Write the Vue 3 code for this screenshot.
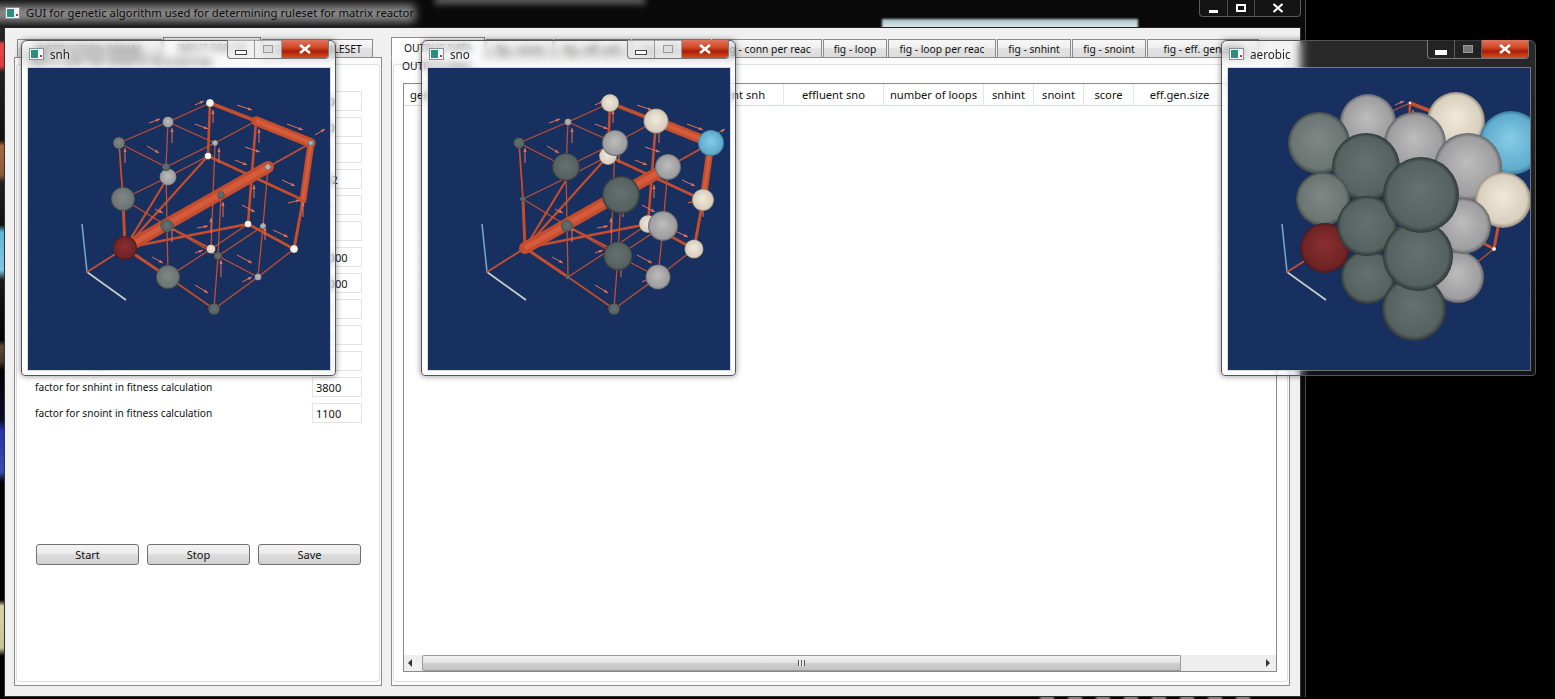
<script setup>
const leftTabs = [
  { t: 'INSTRUCTION PARAM.', w: 145 },
  { t: 'INPUT FOR GA', w: 98, on: true },
  { t: 'DEFAULT RULESET', w: 111 }
]
const rightTabs = [
  { t: 'OUTPUT DATA', w: 94, on: true },
  { t: 'fig - score', w: 67 },
  { t: 'fig - eff. snh', w: 77 },
  { t: 'fig - eff. sno', w: 79 },
  { t: 'fig - conn per reac', w: 110 },
  { t: 'fig - loop', w: 64 },
  { t: 'fig - loop per reac', w: 108 },
  { t: 'fig - snhint', w: 74 },
  { t: 'fig - snoint', w: 74 },
  { t: 'fig - eff. gen.size', w: 112 }
]
const rows = [
  ['population size', '100'], ['number of generations', '500'], ['mutation rate', '0.1'],
  ['crossover rate', '0.82'], ['influent snh', '30'], ['influent sno', '5'],
  ['reactor volume', '15000'], ['aeration volume', '12000'], ['factor for effluent snh', '30'],
  ['factor for effluent sno', '10'], ['factor for loops', '20'],
  ['factor for snhint in fitness calculation', '3800'],
  ['factor for snoint in fitness calculation', '1100']
]
const cols = [
  ['generation', 70], ['connectivity', 105], ['conn per reac', 105], ['effluent snh', 100],
  ['effluent sno', 100], ['number of loops', 100], ['snhint', 50], ['snoint', 50], ['score', 50],
  ['eff.gen.size', 92]
]

const P = {
  A: [182, 35], X: [228, 53], D: [283, 75], B: [140, 54], C: [91, 75], E: [187, 75], F: [180, 88],
  H: [138, 99], G: [240, 99], J: [193, 127], W: [275, 132], K: [95, 131], I: [140, 109], M: [139, 158],
  N: [220, 156], O: [235, 158], R: [266, 181], P: [183, 181], Q: [190, 188], S: [97, 180],
  T: [140, 209], U: [230, 209], V: [186, 241]
}
const edges = [
  ['C','B',1.3],['B','A',1.3],['C','H',1.3],['H','E',1.3],['B','E',1.3],['E','X',1.3],['K','I',1.3],['I','F',1.3],
  ['K','M',1.3],['M','Q',1.3],['Q','U',1.3],['P','N',1.3],['Q','O',1.3],
  ['T','P',1.3],['U','R',1.3],['V','U',1.3],['T','V',1.6],
  ['B','H',1.3],['H','M',1.3],['M','T',1.3],['E','P',1.3],['J','Q',1.3],['Q','V',1.3],['G','O',1.3],['O','U',1.3],
  ['M','P',2],['N','R',2.6],['C','K',1.8],['K','S',3],['S','T',3],['D','G',2],['F','W',2.8],
  ['A','F',2.6],['X','N',2.6],['W','R',3],['S','F',2.2],['S','I',2.2],['S','N',2.8],['A','X',3.5],['X','D',9.5],['D','W',7],['S','G',12],
  ['S','AX',2]
]
const arrows = [
  [119,78,131,85],[209,37,224,42],[259,56,275,62],[287,67,297,61],[167,37,176,33],[121,55,132,51],
  [167,56,180,61],[217,79,232,84],[207,92,219,97],[254,112,267,118],[214,137,227,144],[245,162,260,169],
  [209,187,224,195],[167,217,180,225],[124,189,135,195],[169,160,180,158],[167,185,175,182],[127,141,135,145],
  [214,214,224,209],[260,135,272,132],
  [97,95,97,80],[144,75,144,60],[185,55,185,42],[231,75,231,61],[191,95,191,80],[195,149,195,134],
  [144,174,144,159],[226,130,226,117],[237,172,237,159],[193,209,193,192],[275,149,275,134],[183,165,183,150]
]

const shades = {
  dark: ['#64716f', '#55625f', '#2f3838'],
  mid: ['#808886', '#6b7572', '#414a48'],
  light: ['#bdbdbd', '#9e9ea0', '#646467'],
  cream: ['#f1e9da', '#d8cfbf', '#93897a'],
  white: ['#ffffff', '#efe8da', '#8b8678'],
  blue: ['#86cde9', '#60accd', '#38789a'],
  red: ['#8a3030', '#702324', '#431a24']
}
const n = (k, r, c) => ({ k, r, c })
const windows = [
  {
    id: 'snh', title: 'snh', x: 21, dark: false,
    nodes: [
      n('A',4,'white'),n('B',5.5,'light'),n('C',6,'mid'),n('D',2.5,'blue'),n('E',3,'light'),n('F',3.5,'white'),
      n('G',3,'light'),n('I',8.5,'light'),n('H',4,'dark'),n('J',3.5,'dark'),n('K',12,'mid'),n('M',6.5,'dark'),
      n('N',3.5,'white'),n('O',3,'light'),n('P',4.5,'cream'),n('Q',4,'dark'),n('R',4,'white'),n('S',12,'red'),
      n('T',12,'mid'),n('U',3.5,'light'),n('V',6,'dark')
    ]
  },
  {
    id: 'sno', title: 'sno', x: 421, dark: false,
    nodes: [
      n('B',3.5,'light'),n('C',5.5,'dark'),n('K',3,'dark'),n('T',2.5,'dark'),n('F',9,'cream'),n('A',9,'cream'),n('X',12.5,'cream'),
      n('E',13,'light'),n('D',13,'blue'),n('H',14,'dark'),n('G',13,'light'),n('W',11,'cream'),n('M',6,'dark'),
      n('N',9,'cream'),n('O',15,'light'),n('R',9.5,'cream'),n('U',12.5,'light'),n('Q',14.5,'dark'),n('J',19,'dark'),n('V',6,'dark')
    ]
  },
  {
    id: 'aerobic', title: 'aerobic', x: 1221, dark: true,
    nodes: [
      n('A',1.5,'white'),n('B',28,'light'),n('X',29,'cream'),n('D',32,'blue'),n('C',31,'mid'),n('E',31,'light'),
      n('H',34,'dark'),n('G',34,'light'),n('W',28,'cream'),n('R',2,'white'),n('K',27,'mid'),n('U',26,'light'),n('O',28,'light'),
      n('S',25,'red'),n('T',27,'dark'),n('M',30,'dark'),n('V',32,'dark'),
      n('Q',35,'dark'),n('J',38,'dark')
    ]
  }
]
const edgeLines = edges.map(([a, b, w]) => {
  const p = P[a]
  const q = b === 'AX' ? [59, 204] : P[b]
  return { x1: p[0], y1: p[1], x2: q[0], y2: q[1], w }
})
const tubes = edgeLines.filter((e) => e.w >= 6)
const arrowLines = arrows.map(([x1, y1, x2, y2]) => {
  const len = Math.hypot(x2 - x1, y2 - y1)
  const ux = (x2 - x1) / len
  const uy = (y2 - y1) / len
  const bx = x2 - ux * 4
  const by = y2 - uy * 4
  const head = `${x2},${y2} ${bx - uy * 1.6},${by + ux * 1.6} ${bx + uy * 1.6},${by - ux * 1.6}`
  return { x1, y1, x2, y2, head }
})
const nodesOf = (w) => w.nodes.map((d) => ({
  ...d, x: P[d.k][0], y: P[d.k][1], fill: `url(#${w.id}-${d.c})`
}))
const shadeList = Object.entries(shades)
</script>

<template>
  <div class="desktop">
    <div class="behind-bottom"></div>

    <section class="main-window">
      <header class="main-title">
        <i class="glow glow-title"></i>
        <i class="glow glow-top"></i>
        <i class="glow glow-patch"></i>
        <svg class="app-icon" viewBox="0 0 15 12" width="15" height="12" aria-hidden="true">
          <rect x="0.5" y="0.5" width="14" height="11" fill="#f4f4f4" stroke="#8a8f94" />
          <rect x="2" y="2" width="7" height="8" fill="#2f8b80" />
          <rect x="11" y="7" width="2" height="2" fill="#c03a2b" />
        </svg>
        <span class="main-title-text">GUI for genetic algorithm used for determining ruleset for matrix reactor</span>
        <div class="main-caption">
          <span class="cap-btn cap-min"><i></i></span>
          <span class="cap-btn cap-max"><i></i></span>
          <span class="cap-btn cap-close">
            <svg viewBox="0 0 12 10" width="12" height="10" aria-hidden="true">
              <path d="M1.5 1 L10.5 9 M10.5 1 L1.5 9" stroke="#fff" stroke-width="2.2" fill="none" />
            </svg>
          </span>
        </div>
      </header>

      <div class="client">
        <div class="tab-widget tab-left">
          <nav class="tabs">
            <span
              v-for="tab in leftTabs"
              :key="tab.t"
              class="tab"
              :class="{ on: tab.on }"
              :style="{ width: tab.w + 'px' }"
            >{{ tab.t }}</span>
          </nav>
          <div class="pane">
            <div class="group form-group">
              <div class="group-title left-title">INPUT FOR THE GENETIC ALGORITHM</div>
              <div v-for="r in rows" :key="r[0]" class="form-row">
                <span class="form-label">{{ r[0] }}</span>
                <span class="input">{{ r[1] }}</span>
              </div>
              <div class="buttons">
                <button class="btn">Start</button>
                <button class="btn">Stop</button>
                <button class="btn">Save</button>
              </div>
            </div>
          </div>
        </div>

        <div class="tab-widget">
          <nav class="tabs">
            <span
              v-for="tab in rightTabs"
              :key="tab.t"
              class="tab"
              :class="{ on: tab.on }"
              :style="{ width: tab.w + 'px' }"
            >{{ tab.t }}</span>
          </nav>
          <div class="pane">
            <div class="group table-group">
              <div class="group-title out-title">OUTPUT DATA</div>
              <div class="table">
                <div class="thead">
                  <span v-for="c in cols" :key="c[0]" class="th" :style="{ width: c[1] + 'px' }">{{ c[0] }}</span>
                </div>
                <div class="tbody"></div>
                <div class="scrollbar">
                  <span class="arrow arrow-left"></span>
                  <span class="thumb"><i></i></span>
                  <span class="arrow arrow-right"></span>
                </div>
              </div>
            </div>
          </div>
        </div>
      </div>
    </section>

    <article
      v-for="w in windows"
      :key="w.id"
      class="gl-window"
      :class="{ dark: w.dark }"
      :style="{ left: w.x + 'px' }"
    >
      <header class="gl-title">
        <svg class="gl-icon" viewBox="0 0 15 12" width="15" height="12" aria-hidden="true">
          <rect x="0.5" y="0.5" width="14" height="11" fill="#f6f6f6" stroke="#8a8f94" />
          <rect x="2" y="2" width="7" height="8" fill="#2f8b80" />
          <rect x="11" y="7" width="2" height="2" fill="#c03a2b" />
        </svg>
        <span class="gl-name">{{ w.title }}</span>
        <div class="gl-caption">
          <span class="gcap gcap-min"><i></i></span>
          <span class="gcap gcap-max"><i></i></span>
          <span class="gcap gcap-close">
            <svg viewBox="0 0 14 10" width="14" height="10" aria-hidden="true">
              <path d="M2 1 L12 9 M12 1 L2 9" stroke="#fff" stroke-width="2.6" fill="none" />
            </svg>
          </span>
        </div>
      </header>
      <svg class="scene" viewBox="0 0 302 302" width="302" height="302" aria-hidden="true">
        <defs>
          <radialGradient
            v-for="[name, s] in shadeList"
            :id="w.id + '-' + name"
            :key="name"
            cx="0.5"
            cy="0.5"
            r="0.5"
            fx="0.48"
            fy="0.42"
          >
            <stop offset="0" :stop-color="s[0]" />
            <stop offset="0.86" :stop-color="s[1]" />
            <stop offset="1" :stop-color="s[2]" />
          </radialGradient>
        </defs>
        <rect width="302" height="302" fill="#183060" />
        <line x1="59" y1="204" x2="54" y2="156" stroke="#6fa9c9" stroke-width="1.6" />
        <line x1="59" y1="204" x2="98" y2="232" stroke="#c9cec9" stroke-width="1.6" />
        <line
          v-for="(e, i) in edgeLines"
          :key="'e' + i"
          :x1="e.x1" :y1="e.y1" :x2="e.x2" :y2="e.y2"
          :stroke-width="e.w"
          stroke="#c44d2e"
          stroke-linecap="round"
        />
        <line
          v-for="(e, i) in tubes"
          :key="'t' + i"
          :x1="e.x1" :y1="e.y1" :x2="e.x2" :y2="e.y2"
          :stroke-width="e.w * 0.45"
          stroke="#d45c3c"
        />
        <g v-for="(a, i) in arrowLines" :key="'a' + i">
          <line :x1="a.x1" :y1="a.y1" :x2="a.x2" :y2="a.y2" stroke="#e4705a" stroke-width="1" />
          <polygon :points="a.head" fill="#e4705a" />
        </g>
        <circle
          v-for="d in nodesOf(w)"
          :key="d.k"
          :cx="d.x" :cy="d.y" :r="d.r"
          :fill="d.fill"
        />
      </svg>
    </article>
  </div>
</template>

<style>
html, body { margin: 0; background: #000; }
</style>

<style scoped>
.desktop {
  position: relative;
  width: 1555px;
  height: 699px;
  overflow: hidden;
  background: #000;
  font-family: "Noto Sans", "Open Sans", sans-serif;
  font-size: 11px;
  color: #111;
}
.behind-bottom {
  position: absolute;
  left: 1040px;
  top: 697px;
  width: 215px;
  height: 2px;
  background: repeating-linear-gradient(90deg, #ddd 0 14px, #000 14px 28px);
  filter: blur(1px);
}
.main-window {
  position: absolute;
  left: 0;
  top: 0;
  width: 1306px;
  height: 697px;
  isolation: isolate;
  box-sizing: border-box;
  padding: 0 4px 0 4px;
  display: flex;
  flex-direction: column;
  border-right: 1px solid #4a4a4a;
  background-color: #0a0a0a;
  background-image: linear-gradient(
    180deg,
    #333 0, #222 40px, #e24848 44px, #d83c3c 66px, #222 72px,
    #111 140px, #a5683f 146px, #8a5a38 175px, #222 182px,
    #111 225px, #5fb7d8 232px, #7fc6e0 270px, #1a1a1a 280px,
    #000 340px, #5a4a38 346px, #40362a 362px, #000 370px,
    #0a0a2a 420px, #2233aa 430px, #3a4bb0 472px, #000 482px,
    #000 600px, #d8d2a8 606px, #c9c498 648px, #000 656px
  );
  background-size: 4px 100%;
  background-repeat: no-repeat;
}
.main-title {
  position: relative;
  height: 27px;
  flex: none;
  display: flex;
  align-items: flex-start;
  margin-left: -4px;
  padding-left: 5px;
  background: #0a0a0a;
  overflow: hidden;
}
.glow { position: absolute; display: block; }
.glow-title {
  left: -10px;
  top: 5px;
  width: 425px;
  height: 17px;
  background: #8c8c8c;
  filter: blur(5px);
}
.glow-top {
  left: 435px;
  top: -3px;
  width: 210px;
  height: 7px;
  background: #6a6a6a;
  filter: blur(3px);
}
.glow-patch {
  left: 882px;
  top: 19px;
  width: 256px;
  height: 10px;
  background: linear-gradient(180deg, #a8c4cc, #e4eef0);
  filter: blur(1px);
}
.app-icon { margin-top: 7px; flex: none; position: relative; }
.main-title-text {
  position: relative;
  margin: 4px 0 0 6px;
  font-size: 11.3px;
  line-height: 18px;
  color: #0d0d0d;
  white-space: nowrap;
}
.main-caption {
  position: relative;
  margin-left: auto;
  display: flex;
  height: 16px;
  border: 1px solid #5c5c5c;
  border-top: 0;
  border-radius: 0 0 4px 4px;
  background: #141414;
}
.cap-btn {
  display: flex;
  align-items: center;
  justify-content: center;
  border-left: 1px solid #4c4c4c;
}
.cap-btn:first-child { border-left: 0; }
.cap-min { width: 27px; }
.cap-min i { width: 9px; height: 3px; background: #fff; margin-top: 6px; }
.cap-max { width: 26px; }
.cap-max i { width: 6px; height: 4px; border: 2px solid #fff; }
.cap-close { width: 45px; }
.client {
  flex: 1;
  min-height: 0;
  box-sizing: border-box;
  padding: 9px 10px 10px 9px;
  background: #f0f0f0;
  display: grid;
  grid-template-columns: 368px 899px;
  column-gap: 9px;
  border: 1px solid #333;
  border-top-color: #222;
}
.tab-widget { display: flex; flex-direction: column; min-width: 0; }
.tabs {
  height: 21px;
  display: flex;
  flex: none;
  overflow: hidden;
  position: relative;
  margin-bottom: -1px;
}
.tab-left .tabs { padding-left: 3px; }
.tab {
  box-sizing: border-box;
  height: 19px;
  margin-top: 2px;
  margin-right: 1px;
  flex: none;
  display: flex;
  align-items: center;
  justify-content: center;
  white-space: nowrap;
  overflow: hidden;
  border: 1px solid #8c8c8c;
  background: linear-gradient(180deg, #f7f7f7 0, #efefef 45%, #e2e2e2 50%, #dcdcdc 100%);
  font-size: 10.3px;
  line-height: 14px;
}
.tab.on {
  height: 21px;
  margin-top: 0;
  background: #fff;
  border-bottom-color: #fff;
}
.pane {
  flex: 1;
  min-height: 0;
  box-sizing: border-box;
  border: 1px solid #8c8c8c;
  background: #fbfbfb;
  padding: 6px 1px 3px 1px;
}
.group {
  box-sizing: border-box;
  height: 100%;
  border: 1px solid #dcdfe3;
  border-radius: 3px;
  background: #fff;
  position: relative;
}
.form-group { padding: 26px 17px 0 18px; }
.group-title {
  position: absolute;
  left: 8px;
  font-size: 10.3px;
  line-height: 14px;
  color: #111;
  white-space: nowrap;
}
.left-title { top: -10px; left: 12px; }
.out-title { top: -6px; }
.form-row {
  height: 20px;
  margin-bottom: 6px;
  display: flex;
  align-items: center;
  justify-content: space-between;
}
.form-label { margin-top: 0; font-size: 10.2px; white-space: nowrap; }
.input {
  box-sizing: border-box;
  width: 50px;
  height: 20px;
  padding: 2px 3px;
  border: 1px solid #e3e3e3;
  line-height: 15px;
  background: #fff;
}
.buttons { display: flex; gap: 8px; margin-top: 121px; padding-left: 1px; }
.btn {
  box-sizing: border-box;
  flex: none;
  width: 103px;
  height: 21px;
  padding: 0;
  border: 1px solid #707070;
  border-radius: 3px;
  background: linear-gradient(180deg, #f3f3f3 0, #ebebeb 45%, #dddddd 50%, #cfcfcf 100%);
  font: inherit;
  color: #111;
}
.table-group { padding: 18px 10px 9px 9px; }
.table {
  height: 100%;
  box-sizing: border-box;
  border: 1px solid #8a8a8a;
  display: flex;
  flex-direction: column;
  background: #fff;
}
.thead {
  height: 21px;
  flex: none;
  display: flex;
  overflow: hidden;
  border-bottom: 1px solid #d8dde3;
  background: #fff;
  font-size: 11.2px;
}
.th {
  box-sizing: border-box;
  flex: none;
  border-right: 1px solid #e4e7ea;
  text-align: center;
  line-height: 21px;
  white-space: nowrap;
  overflow: hidden;
}
.th:first-child { text-align: left; padding-left: 6px; }
.tbody { flex: 1; }
.scrollbar {
  height: 16px;
  flex: none;
  display: flex;
  align-items: stretch;
  background: #eeeeee;
}
.arrow { width: 18px; flex: none; position: relative; }
.arrow::after {
  content: "";
  position: absolute;
  top: 4px;
  border: 4px solid transparent;
}
.arrow-left::after { left: 4px; border-right-color: #333; border-left-width: 0; }
.arrow-right::after { right: 6px; border-left-color: #333; border-right-width: 0; }
.thumb {
  width: 759px;
  flex: none;
  box-sizing: border-box;
  border: 1px solid #9a9a9a;
  border-radius: 2px 0 0 2px;
  background: linear-gradient(180deg, #f2f2f2 0, #e4e4e4 45%, #cfcfcf 55%, #c2c2c2 100%);
  display: flex;
  align-items: center;
  justify-content: center;
}
.thumb i {
  width: 7px;
  height: 6px;
  background: repeating-linear-gradient(90deg, #555 0 1px, #eee 1px 3px);
}
.arrow-right { margin-left: auto; }

.gl-window {
  position: absolute;
  z-index: 1;
  top: 40px;
  width: 315px;
  height: 336px;
  box-sizing: border-box;
  padding: 0 6px 6px;
  border: 1px solid #555;
  border-radius: 6px 6px 4px 4px;
  display: flex;
  flex-direction: column;
  background: linear-gradient(180deg, rgba(255, 255, 255, 0.16), rgba(255, 255, 255, 0.08));
  backdrop-filter: blur(4px);
  box-shadow: 0 0 6px rgba(0, 0, 0, 0.45);
}
.gl-title {
  height: 27px;
  flex: none;
  display: flex;
  align-items: flex-start;
  position: relative;
}
.gl-icon { margin: 7px 0 0 1px; flex: none; }
.gl-name {
  margin: 4px 0 0 6px;
  font-size: 11.7px;
  line-height: 18px;
  color: #222;
  text-shadow: 0 0 5px #fff, 0 0 9px #fff;
}
.gl-caption {
  position: absolute;
  right: 0;
  top: -1px;
  height: 18px;
  display: flex;
  border: 1px solid #7a7a7a;
  border-top: 0;
  border-radius: 0 0 4px 4px;
  overflow: hidden;
  background: rgba(235, 235, 235, 0.55);
}
.gcap {
  display: flex;
  align-items: center;
  justify-content: center;
  border-right: 1px solid rgba(120, 120, 120, 0.7);
}
.gcap-min { width: 26px; }
.gcap-min i { width: 10px; height: 3px; margin-top: 6px; border: 1px solid #444; background: #fff; }
.gcap-max { width: 26px; }
.gcap-max i { width: 8px; height: 6px; border: 1px solid #9a9a9a; background: #ddd; }
.gcap-close {
  width: 46px;
  border-right: 0;
  background: linear-gradient(180deg, #e0745a 0, #d24a2b 40%, #a71f05 62%, #dd4d20 100%);
}
.dark .gcap-min i { background: #fff; border-color: #fff; }
.dark .gcap-max i { background: #777; border-color: #999; }
.dark .gl-caption { background: rgba(30, 30, 30, 0.6); }
.scene { display: block; flex: none; outline: 1px solid rgba(190, 190, 190, 0.55); }
</style>
